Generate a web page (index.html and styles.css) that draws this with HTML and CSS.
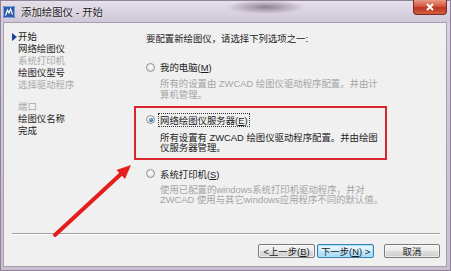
FILE: index.html
```html
<!DOCTYPE html>
<html lang="zh-CN">
<head>
<meta charset="utf-8">
<title>添加绘图仪 - 开始</title>
<link rel="stylesheet" href="styles.css">
</head>
<body>
<div class="window">
  <div class="titlebar">
    <svg class="appicon" width="12" height="12" viewBox="0 0 12 12">
      <rect x="0" y="0" width="12" height="12" rx="1" fill="#2a5aa8"/>
      <rect x="0.5" y="0.5" width="11" height="11" rx="1" fill="none" stroke="#7fa4dc" stroke-width="1"/>
      <path d="M2.5 9.5 L4.5 4 L6 7 L7.5 3 L9.5 8.5" fill="none" stroke="#ffffff" stroke-width="1.2"/>
    </svg>
    <span class="title">添加绘图仪 - 开始</span>
    <div class="close">
      <svg width="10" height="8" viewBox="0 0 10 8"><path d="M2 1 L8 7 M8 1 L2 7" stroke="#ffffff" stroke-width="1.8"/></svg>
    </div>
  </div>
  <div class="client">
    <div class="main">
      <nav class="steps">
        <div class="step current"><span class="marker"></span>开始</div>
        <div class="step">网络绘图仪</div>
        <div class="step disabled">系统打印机</div>
        <div class="step">绘图仪型号</div>
        <div class="step disabled">选择驱动程序</div>
        <div class="step-gap"></div>
        <div class="step disabled">端口</div>
        <div class="step">绘图仪名称</div>
        <div class="step">完成</div>
      </nav>
      <section class="page">
        <p class="lead">要配置新绘图仪，请选择下列选项之一:</p>
        <div class="option first">
          <div class="opt-row"><span class="radio"></span><span class="label">我的电脑(<u>M</u>)</span></div>
          <p class="desc">所有的设置由 ZWCAD 绘图仪驱动程序配置。并由计<br>算机管理。</p>
        </div>
        <div class="option boxed">
          <div class="opt-row"><span class="radio checked"></span><span class="label focus">网络绘图仪服务器(<u>E</u>)</span></div>
          <p class="desc dark">所有设置有 ZWCAD 绘图仪驱动程序配置。并由绘图<br>仪服务器管理。</p>
        </div>
        <div class="option last">
          <div class="opt-row"><span class="radio"></span><span class="label">系统打印机(<u>S</u>)</span></div>
          <p class="desc">使用已配置的windows系统打印机驱动程序，并对<br>ZWCAD 使用与其它windows应用程序不同的默认值。</p>
        </div>
      </section>
    </div>
    <div class="sep"></div>
    <div class="buttons">
      <button class="btn">&lt;上一步(<u>B</u>)</button>
      <button class="btn default">下一步(<u>N</u>) &gt;</button>
      <button class="btn cancel">取消</button>
    </div>
  </div>
  <svg class="arrow" width="451" height="271" viewBox="0 0 451 271">
    <line x1="55" y1="235" x2="121" y2="174" stroke="#e51d1d" stroke-width="4" stroke-linecap="round"/>
    <polygon points="131,165 125,179 116.5,170" fill="#e51d1d"/>
  </svg>
</div>
</body>
</html>
```
FILE: styles.css
```css
* { box-sizing: border-box; }
html, body { margin: 0; padding: 0; }
body {
  width: 451px;
  height: 271px;
  overflow: hidden;
  font-family: "Liberation Sans", "Noto Sans CJK SC", sans-serif;
  font-size: 9.4px;
  color: #1c1c1c;
}
.window {
  position: relative;
  width: 451px;
  height: 271px;
  background: linear-gradient(180deg, #ddd6e3 0%, #cfc5d8 40%, #c9bdd2 100%);
  border: 1px solid #8f8399;
  display: flex;
  flex-direction: column;
}
.titlebar {
  height: 21px;
  display: flex;
  align-items: center;
  padding-left: 2px;
  position: relative;
  background:
    radial-gradient(ellipse 40px 7px at 265px 6px, rgba(70,60,75,0.55), rgba(70,60,75,0) 100%),
    linear-gradient(180deg, #e6e0ea 0%, #d8d0de 60%, #cfc6d7 100%);
}
.appicon { flex: none; margin-right: 6px; margin-top: 1px; }
.title {
  font-size: 10.4px;
  line-height: 12px;
  padding-top: 2px;
  color: #1a1a1a;
  text-shadow: 0 0 3px rgba(255,255,255,0.9);
}
.close {
  position: absolute;
  right: 3px;
  top: -1px;
  width: 34px;
  height: 15px;
  border: 1px solid #7a2a22;
  border-top: none;
  border-radius: 0 0 4px 4px;
  background: linear-gradient(180deg, #e79a86 0%, #d3573f 45%, #bb3422 55%, #cf5f3e 100%);
  display: flex;
  align-items: center;
  justify-content: center;
}
.client {
  flex: none;
  height: 245px;
  margin: 0 3px 0 2px;
  background: #f0f0f0;
  border: 1px solid #a79fae;
  display: flex;
  flex-direction: column;
}
.main {
  height: 210px;
  display: flex;
}
.steps {
  width: 130px;
  padding: 8px 0 0 14px;
  line-height: 12px;
}
.step { white-space: nowrap; color: #1c1c1c; }
.step.disabled { color: #a8a8a8; }
.step-gap { height: 10px; }
.marker {
  display: inline-block;
  width: 0;
  height: 0;
  margin-left: -6px;
  margin-right: 1px;
  border-left: 5px solid #1f3f9a;
  border-top: 4px solid transparent;
  border-bottom: 4px solid transparent;
  vertical-align: -1px;
}
.page {
  flex: 1;
  padding: 10px 0 0 12px;
}
.lead {
  margin: 0;
  line-height: 12px;
  white-space: nowrap;
}
.option { width: 241px; }
.option.first { margin-top: 16px; }
.opt-row {
  display: flex;
  align-items: center;
  height: 12px;
  white-space: nowrap;
}
.radio {
  flex: none;
  width: 9px;
  height: 9px;
  border-radius: 50%;
  border: 1px solid #8f9295;
  background: radial-gradient(circle at 50% 40%, #ffffff 0%, #e4e4e4 70%, #d0d0d0 100%);
  margin-right: 5px;
  position: relative;
}
.radio.checked::after {
  content: "";
  position: absolute;
  left: 1.5px;
  top: 1.5px;
  width: 4px;
  height: 4px;
  border-radius: 50%;
  background: radial-gradient(circle at 40% 35%, #8fc3f0 0%, #2a6bb8 60%, #1d4f8c 100%);
}
.label { line-height: 11px; padding-top: 1px; }
.label.focus {
  outline: 1px dotted #333;
  outline-offset: 0px;
  padding: 1px 1px 0 1px;
  margin-left: -1px;
}
.desc {
  margin: 6px 0 0 14px;
  line-height: 10.8px;
  color: #a5a5a5;
  white-space: nowrap;
}
.desc.dark { color: #1c1c1c; margin-top: 7px; }
.option.boxed {
  margin: 5px 0 0 -12px;
  width: 253px;
  height: 54px;
  border: 2px solid #d8262c;
  padding: 6px 0 0 10px;
}
.option.last { margin-top: 8px; }
.option.last .desc { margin-top: 5px; }
.sep {
  height: 2px;
  margin: 0 6px 0 8px;
  border-top: 1px solid #a0a0a0;
  border-bottom: 1px solid #ffffff;
}
.buttons {
  display: flex;
  justify-content: flex-end;
  padding: 9px 6px 0 0;
}
.btn {
  height: 14px;
  width: 57px;
  padding: 1px 0 0 0;
  margin: 0;
  font-family: "Liberation Sans", "Noto Sans CJK SC", sans-serif;
  font-size: 9.4px;
  line-height: 11px;
  color: #1c1c1c;
  border: 1px solid #7a7a7a;
  border-radius: 2px;
  background: linear-gradient(180deg, #f4f4f4 0%, #ebebeb 48%, #dcdcdc 52%, #cfcfcf 100%);
  box-shadow: inset 0 0 0 1px rgba(255,255,255,0.6);
}
.btn + .btn { margin-left: 2px; }
.btn.default {
  border-color: #3c7fb1;
  background: linear-gradient(180deg, #eaf6fd 0%, #d9f0fc 48%, #bee6fd 52%, #a7d9f5 100%);
  box-shadow: inset 0 0 0 1px #a8e0f8;
}
.btn.cancel { width: 56px; margin-left: 10px; }
.arrow {
  position: absolute;
  left: -1px;
  top: -1px;
  pointer-events: none;
}
```
